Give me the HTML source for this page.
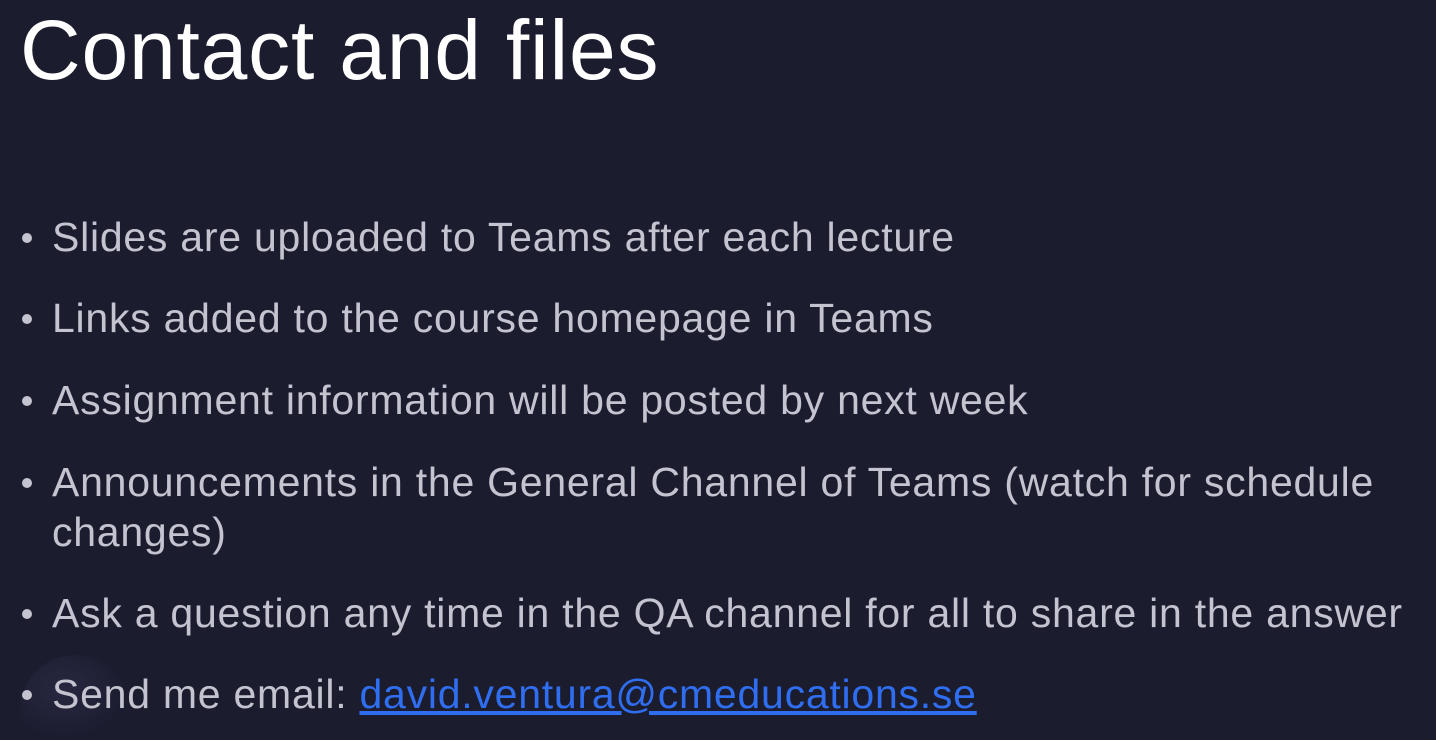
<!DOCTYPE html>
<html><head><meta charset="utf-8"><style>
html,body{margin:0;padding:0;width:1436px;height:740px;overflow:hidden}
body{background:#1c1c2f;position:relative;font-family:"Liberation Sans",sans-serif}
.t{position:absolute;left:20px;top:0;font-size:84px;color:#fff;letter-spacing:0.8px;line-height:100px;white-space:nowrap}
.l{position:absolute;left:52px;font-size:41px;color:#c4c4d0;line-height:50px;white-space:nowrap;letter-spacing:0.75px}
.b{position:absolute;left:22px;width:10px;height:10px;border-radius:50%;background:#c4c4d0}
a{color:#2f6ef0;text-decoration:underline}
.deco{position:absolute;left:20px;top:655px;width:110px;height:85px;border-radius:55px 55px 0 0;background:radial-gradient(ellipse at 40% 40%,#2a2a45,#1c1c2f 70%);opacity:.8}
</style></head><body>
<div class="deco"></div>
<div class="t">Contact and files</div>
<div class="b" style="top:233px"></div><div class="l" style="top:212px">Slides are uploaded to Teams after each lecture</div>
<div class="b" style="top:314px"></div><div class="l" style="top:293px">Links added to the course homepage in Teams</div>
<div class="b" style="top:396px"></div><div class="l" style="top:375px">Assignment information will be posted by next week</div>
<div class="b" style="top:478px"></div><div class="l" style="top:457px">Announcements in the General Channel of Teams (watch for schedule</div>
<div class="l" style="top:507px">changes)</div>
<div class="b" style="top:609px"></div><div class="l" style="top:588px">Ask a question any time in the QA channel for all to share in the answer</div>
<div class="b" style="top:690px"></div><div class="l" style="top:669px">Send me email: <a>david.ventura@cmeducations.se</a></div>
</body></html>
